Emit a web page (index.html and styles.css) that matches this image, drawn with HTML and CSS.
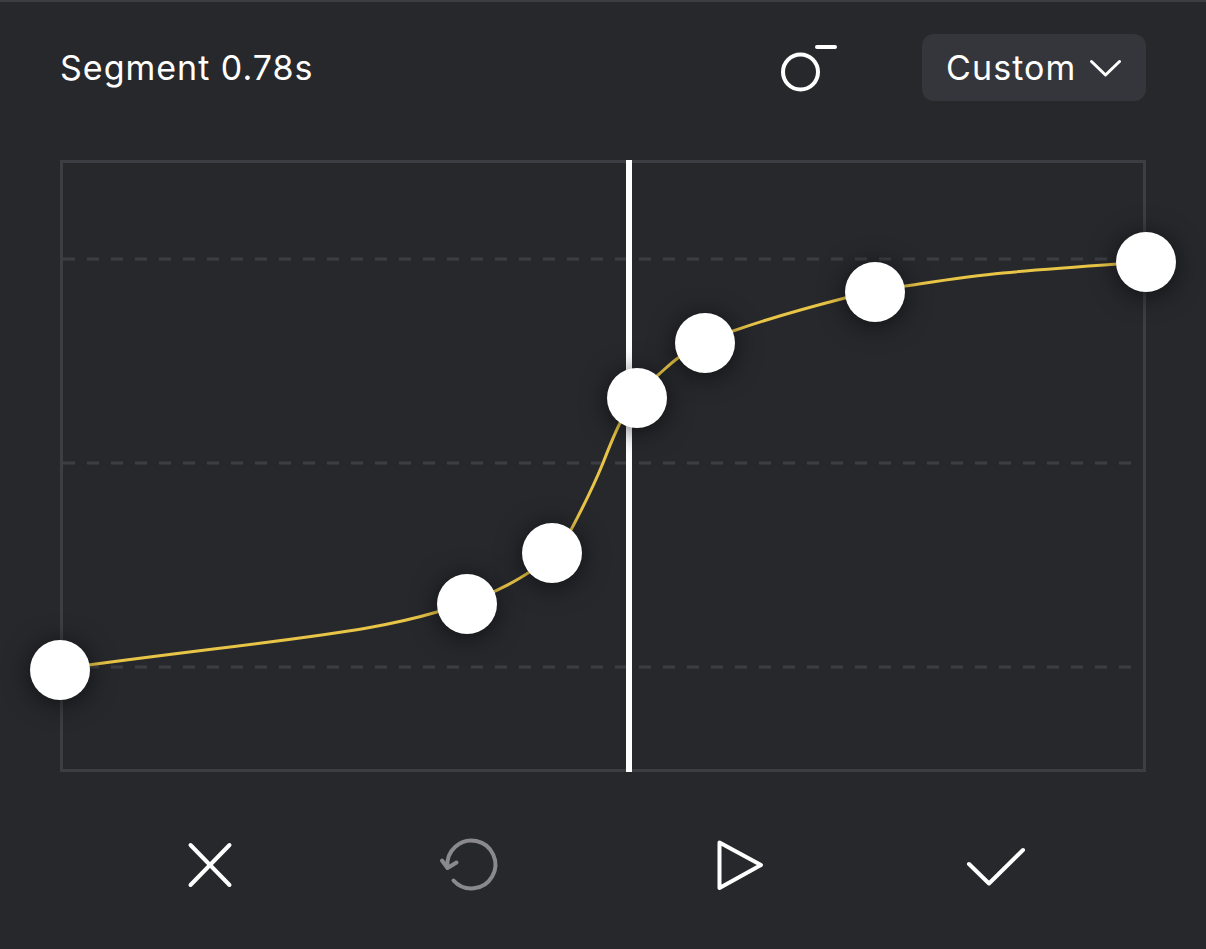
FILE: index.html
```html
<!DOCTYPE html>
<html lang="en">
<head>
    <meta charset="UTF-8">
    <meta name="viewport" content="width=device-width, initial-scale=1.0">
    <title>Segment Speed Curve</title>
    <link rel="stylesheet" href="styles.css">
</head>
<body>

    <div class="editor">
        <div class="top-bar">
            <span class="segment-label">Segment 0.78s</span>
            <svg class="ease-icon" viewBox="779 37.5 60 60">
                <circle cx="800.5" cy="71.5" r="17.5"/>
                <line x1="817" y1="46.5" x2="835" y2="46.5"/>
            </svg>
            <button class="preset-btn">
                Custom
                <svg class="chevron" viewBox="1089 55 32 24">
                    <polyline points="1091.5,60.5 1105.5,74 1119.5,60.5"/>
                </svg>
            </button>
        </div>

        <svg class="curve-chart" viewBox="0 130 1206 705">
            <rect class="plot-frame" x="61.5" y="161.5" width="1083" height="609"/>
            <line class="grid-line" x1="63" y1="259" x2="1143" y2="259"/>
            <line class="grid-line" x1="63" y1="463" x2="1143" y2="463"/>
            <line class="grid-line" x1="63" y1="667" x2="1143" y2="667"/>
            <line class="playhead" x1="629" y1="160" x2="629" y2="772"/>
            <path class="speed-curve" d="M60 669 C180 652 300 640 367 628 C395 623 420 617 437 612 C470 602 495 593 520 578 C540 566 558 555 572 528 C582 509 592 490 603 463 C610 445 615 433 620 423 C630 402 645 385 658 375 C665 369 671 363 678 358 C695 346 715 337 733 331 C770 318 810 307 845 298 C865 293 885 289 905 286 C940 280.8 970 276 1003 273 C1045 269 1090 266 1146 262"/>
            <circle class="point" cx="60" cy="670" r="30"/>
            <circle class="point" cx="467" cy="604" r="30"/>
            <circle class="point" cx="552" cy="553" r="30"/>
            <circle class="point" cx="705" cy="343" r="30"/>
            <circle class="point" cx="875" cy="292" r="30"/>
            <circle class="point" cx="1146" cy="262" r="30"/>
            <circle class="point" cx="637" cy="398" r="30"/>
        </svg>

        <div class="bottom-bar">
            <button class="icon-btn">
                <svg viewBox="170 835 80 60">
                    <line x1="190.5" y1="845" x2="229.5" y2="885"/>
                    <line x1="229.5" y1="845" x2="190.5" y2="885"/>
                </svg>
            </button>
            <button class="icon-btn disabled">
                <svg viewBox="430 835 80 60">
                    <path d="M453.5 880.5 A24 24 0 1 0 447.5 867"/>
                    <polyline points="442,860.5 447.5,868 456.5,862.5"/>
                </svg>
            </button>
            <button class="icon-btn">
                <svg viewBox="690 835 80 60">
                    <polygon points="719.5,842.5 761,865 719.5,888"/>
                </svg>
            </button>
            <button class="icon-btn">
                <svg viewBox="950 835 80 60">
                    <polyline points="969,864 989,883.5 1023,850"/>
                </svg>
            </button>
        </div>
    </div>

</body>
</html>
```

FILE: styles.css
```css
body {
    margin: 0;
    background-color: #27282c;
    font-family: "Inter", "Liberation Sans", sans-serif;
    color: white;
}

.editor {
    border-top: 2px solid #3d3e43;
    height: 947px;
}

.top-bar {
    display: flex;
    align-items: center;
    padding: 32px 60px 29px 60px;
}

.segment-label {
    flex: 1;
    font-size: 34px;
    letter-spacing: 1px;
}

.ease-icon {
    width: 60px;
    height: 60px;
    margin-right: 83px;
    fill: none;
    stroke: white;
    stroke-width: 4;
    stroke-linecap: round;
}

.preset-btn {
    display: flex;
    align-items: center;
    justify-content: space-between;
    width: 224px;
    height: 67px;
    padding: 0 25px 0 24px;
    border: none;
    border-radius: 12px;
    background-color: #35363b;
    color: white;
    font-family: inherit;
    font-size: 34px;
    letter-spacing: 1.1px;
}

.chevron {
    width: 32px;
    height: 24px;
    fill: none;
    stroke: white;
    stroke-width: 3;
    stroke-linecap: round;
    stroke-linejoin: round;
}

.curve-chart {
    display: block;
    width: 1206px;
    height: 705px;
    overflow: visible;
}

.plot-frame {
    fill: none;
    stroke: #3d3e43;
    stroke-width: 3;
}

.grid-line {
    stroke: #3d3e43;
    stroke-width: 3;
    stroke-dasharray: 12 12;
}

.playhead {
    stroke: white;
    stroke-width: 6;
}

.speed-curve {
    fill: none;
    stroke: #e8c547;
    stroke-width: 3;
}

.point {
    fill: white;
    filter: drop-shadow(0 3px 13px rgba(0, 0, 0, 0.6));
}

.bottom-bar {
    display: flex;
    padding-left: 80px;
}

.icon-btn {
    display: flex;
    justify-content: center;
    width: 260px;
    height: 60px;
    padding: 0;
    border: none;
    background: none;
}

.icon-btn svg {
    width: 80px;
    height: 60px;
    fill: none;
    stroke: white;
    stroke-width: 4;
    stroke-linecap: round;
    stroke-linejoin: round;
}

.icon-btn.disabled svg {
    stroke: #8a8a8e;
}
```
